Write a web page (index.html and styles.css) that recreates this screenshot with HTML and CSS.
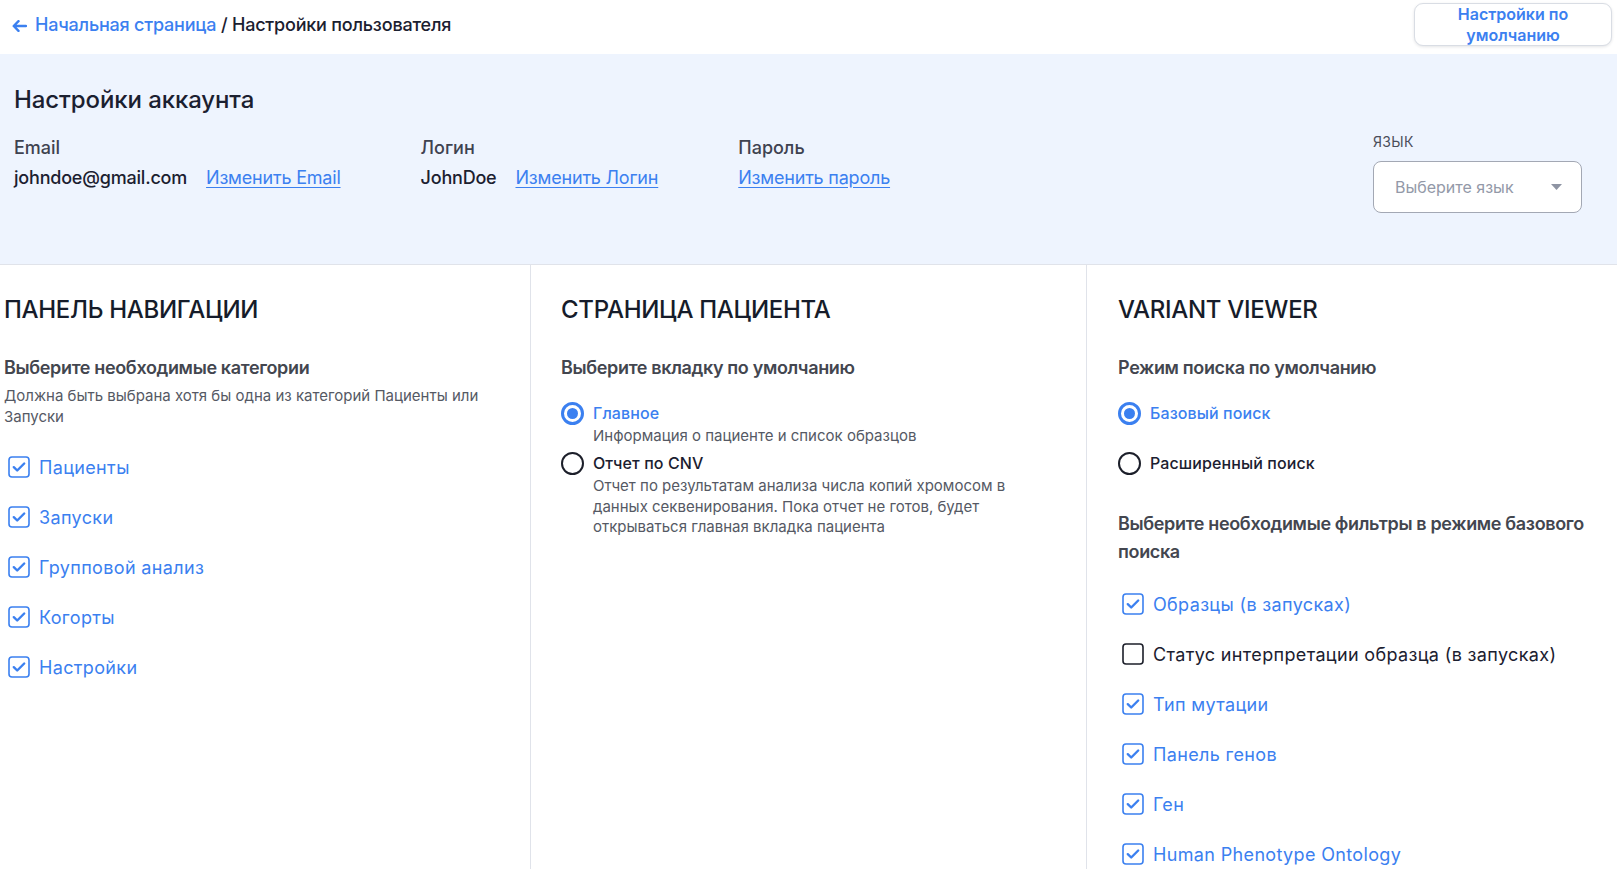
FILE: index.html
```html
<!DOCTYPE html>
<html lang="ru">
<head>
<meta charset="utf-8">
<title>Настройки пользователя</title>
<link rel="stylesheet" href="styles.css">
</head>
<body>
<header class="topbar">
  <nav class="crumbs">
    <svg class="back" width="15" height="12" viewBox="0 0 15 12"><path d="M14 6H2M6.5 1.2L1.7 6l4.8 4.8" fill="none" stroke="#3b80f0" stroke-width="2.4" stroke-linecap="round" stroke-linejoin="round"/></svg>
    <a class="crumb-link" href="#">Начальная страница</a>
    <span class="crumb-current">&nbsp;/ Настройки пользователя</span>
  </nav>
  <button class="defaults-btn">Настройки по<br>умолчанию</button>
</header>

<section class="account">
  <h1 class="account-title">Настройки аккаунта</h1>
  <div class="account-row">
    <div class="field">
      <div class="field-label">Email</div>
      <div class="field-value"><span class="value">johndoe@gmail.com</span><a class="change" href="#">Изменить Email</a></div>
    </div>
    <div class="field">
      <div class="field-label">Логин</div>
      <div class="field-value"><span class="value">JohnDoe</span><a class="change" href="#">Изменить Логин</a></div>
    </div>
    <div class="field">
      <div class="field-label">Пароль</div>
      <div class="field-value"><a class="change" href="#">Изменить пароль</a></div>
    </div>
    <div class="lang">
      <div class="lang-label">ЯЗЫК</div>
      <div class="select">
        <span class="placeholder">Выберите язык</span>
        <svg width="11" height="6" viewBox="0 0 11 6"><path d="M0 0h11L5.5 6z" fill="#8e94a3"/></svg>
      </div>
    </div>
  </div>
</section>

<main class="columns">
  <section class="col col-nav">
    <h2 class="col-title">ПАНЕЛЬ НАВИГАЦИИ</h2>
    <h3 class="sub">Выберите необходимые категории</h3>
    <p class="hint">Должна быть выбрана хотя бы одна из категорий Пациенты или Запуски</p>
    <ul class="checks">
      <li class="check on"><span class="box"><svg width="22" height="22" viewBox="0 0 22 22"><rect x="1" y="1" width="20" height="20" rx="3" fill="#fff" stroke="#3b80f0" stroke-width="1.6"/><path d="M5.8 11.2l3.4 3.3 7-7" fill="none" stroke="#3b80f0" stroke-width="2.4" stroke-linecap="round" stroke-linejoin="round"/></svg></span>Пациенты</li>
      <li class="check on"><span class="box"><svg width="22" height="22" viewBox="0 0 22 22"><rect x="1" y="1" width="20" height="20" rx="3" fill="#fff" stroke="#3b80f0" stroke-width="1.6"/><path d="M5.8 11.2l3.4 3.3 7-7" fill="none" stroke="#3b80f0" stroke-width="2.4" stroke-linecap="round" stroke-linejoin="round"/></svg></span>Запуски</li>
      <li class="check on"><span class="box"><svg width="22" height="22" viewBox="0 0 22 22"><rect x="1" y="1" width="20" height="20" rx="3" fill="#fff" stroke="#3b80f0" stroke-width="1.6"/><path d="M5.8 11.2l3.4 3.3 7-7" fill="none" stroke="#3b80f0" stroke-width="2.4" stroke-linecap="round" stroke-linejoin="round"/></svg></span>Групповой анализ</li>
      <li class="check on"><span class="box"><svg width="22" height="22" viewBox="0 0 22 22"><rect x="1" y="1" width="20" height="20" rx="3" fill="#fff" stroke="#3b80f0" stroke-width="1.6"/><path d="M5.8 11.2l3.4 3.3 7-7" fill="none" stroke="#3b80f0" stroke-width="2.4" stroke-linecap="round" stroke-linejoin="round"/></svg></span>Когорты</li>
      <li class="check on"><span class="box"><svg width="22" height="22" viewBox="0 0 22 22"><rect x="1" y="1" width="20" height="20" rx="3" fill="#fff" stroke="#3b80f0" stroke-width="1.6"/><path d="M5.8 11.2l3.4 3.3 7-7" fill="none" stroke="#3b80f0" stroke-width="2.4" stroke-linecap="round" stroke-linejoin="round"/></svg></span>Настройки</li>
    </ul>
  </section>

  <section class="col col-patient">
    <h2 class="col-title">СТРАНИЦА ПАЦИЕНТА</h2>
    <h3 class="sub">Выберите вкладку по умолчанию</h3>
    <div class="radios">
      <div class="radio-item">
        <div class="radio on"><span class="dot"></span>Главное</div>
        <p class="radio-desc">Информация о пациенте и список образцов</p>
      </div>
      <div class="radio-item">
        <div class="radio"><span class="dot"></span>Отчет по CNV</div>
        <p class="radio-desc">Отчет по результатам анализа числа копий хромосом в данных секвенирования. Пока отчет не готов, будет открываться главная вкладка пациента</p>
      </div>
    </div>
  </section>

  <section class="col col-variant">
    <h2 class="col-title">VARIANT VIEWER</h2>
    <h3 class="sub">Режим поиска по умолчанию</h3>
    <div class="radios">
      <div class="radio-item">
        <div class="radio on"><span class="dot"></span>Базовый поиск</div>
      </div>
      <div class="radio-item">
        <div class="radio"><span class="dot"></span>Расширенный поиск</div>
      </div>
    </div>
    <h3 class="sub sub-filters">Выберите необходимые фильтры в режиме базового поиска</h3>
    <ul class="checks">
      <li class="check on"><span class="box"><svg width="22" height="22" viewBox="0 0 22 22"><rect x="1" y="1" width="20" height="20" rx="3" fill="#fff" stroke="#3b80f0" stroke-width="1.6"/><path d="M5.8 11.2l3.4 3.3 7-7" fill="none" stroke="#3b80f0" stroke-width="2.4" stroke-linecap="round" stroke-linejoin="round"/></svg></span>Образцы (в запусках)</li>
      <li class="check"><span class="box"><svg width="22" height="22" viewBox="0 0 22 22"><rect x="1" y="1" width="20" height="20" rx="3" fill="#fff" stroke="#1c1f2a" stroke-width="1.6"/></svg></span>Статус интерпретации образца (в запусках)</li>
      <li class="check on"><span class="box"><svg width="22" height="22" viewBox="0 0 22 22"><rect x="1" y="1" width="20" height="20" rx="3" fill="#fff" stroke="#3b80f0" stroke-width="1.6"/><path d="M5.8 11.2l3.4 3.3 7-7" fill="none" stroke="#3b80f0" stroke-width="2.4" stroke-linecap="round" stroke-linejoin="round"/></svg></span>Тип мутации</li>
      <li class="check on"><span class="box"><svg width="22" height="22" viewBox="0 0 22 22"><rect x="1" y="1" width="20" height="20" rx="3" fill="#fff" stroke="#3b80f0" stroke-width="1.6"/><path d="M5.8 11.2l3.4 3.3 7-7" fill="none" stroke="#3b80f0" stroke-width="2.4" stroke-linecap="round" stroke-linejoin="round"/></svg></span>Панель генов</li>
      <li class="check on"><span class="box"><svg width="22" height="22" viewBox="0 0 22 22"><rect x="1" y="1" width="20" height="20" rx="3" fill="#fff" stroke="#3b80f0" stroke-width="1.6"/><path d="M5.8 11.2l3.4 3.3 7-7" fill="none" stroke="#3b80f0" stroke-width="2.4" stroke-linecap="round" stroke-linejoin="round"/></svg></span>Ген</li>
      <li class="check on"><span class="box"><svg width="22" height="22" viewBox="0 0 22 22"><rect x="1" y="1" width="20" height="20" rx="3" fill="#fff" stroke="#3b80f0" stroke-width="1.6"/><path d="M5.8 11.2l3.4 3.3 7-7" fill="none" stroke="#3b80f0" stroke-width="2.4" stroke-linecap="round" stroke-linejoin="round"/></svg></span>Human Phenotype Ontology</li>
    </ul>
  </section>
</main>
</body>
</html>
```

FILE: styles.css
```css
* { box-sizing: border-box; }
html, body { margin: 0; padding: 0; }
body {
  font-family: Inter, "Noto Sans", "Liberation Sans", sans-serif;
  color: #1b2030;
  background: #fff;
}
h1, h2, h3, p, ul { margin: 0; padding: 0; }
ul { list-style: none; }
a { color: #3b80f0; }

.topbar {
  height: 54px;
  display: flex;
  align-items: center;
  justify-content: space-between;
  padding: 3px 5px 8px 12px;
}
.crumbs {
  display: flex;
  align-items: center;
  font-size: 18px;
  font-weight: 500;
  line-height: 24px;
  letter-spacing: -0.2px;
  margin-top: 1px;
}
.back { margin-right: 8px; margin-top: 1px; }
.crumb-link { text-decoration: none; color: #3b80f0; }
.crumb-current { color: #1b2030; }
.defaults-btn {
  width: 198px;
  height: 43px;
  border: 1px solid #d9dde4;
  border-radius: 9px;
  background: #fff;
  box-shadow: 0 1px 3px rgba(30, 40, 60, 0.12);
  font-family: inherit;
  font-size: 16px;
  font-weight: 600;
  line-height: 20.5px;
  color: #3b80f0;
  padding: 0;
}

.account {
  background: #eef4fe;
  border-bottom: 1px solid #e0e3ea;
  height: 211px;
  padding: 31px 35px 0 14px;
}
.account-title {
  font-size: 24px;
  font-weight: 500;
  line-height: 30px;
  color: #1b2030;
  letter-spacing: -0.1px;
}
.account-row {
  display: flex;
  align-items: flex-start;
  gap: 80px;
  margin-top: 21px;
}
.field-label {
  font-size: 18px;
  font-weight: 500;
  line-height: 24px;
  color: #3e4250;
}
.field-value {
  display: flex;
  gap: 19px;
  margin-top: 6px;
  font-size: 18px;
  line-height: 24px;
  letter-spacing: -0.2px;
}
.value { color: #1b2030; font-weight: 500; }
.change { color: #3b80f0; text-decoration: underline; text-underline-offset: 3px; }
.lang { margin-left: auto; width: 209px; margin-top: -3px; }
.lang-label {
  font-size: 14px;
  line-height: 18px;
  color: #4a4e5a;
  letter-spacing: 0.3px;
}
.select {
  margin-top: 10px;
  height: 52px;
  border: 1px solid #a3a8b4;
  border-radius: 8px;
  background: #fff;
  display: flex;
  align-items: center;
  justify-content: space-between;
  padding: 0 19px 0 21px;
}
.placeholder { font-size: 16px; color: #9399a8; }

.columns {
  display: flex;
  align-items: stretch;
  min-height: 620px;
}
.col { padding-top: 30px; padding-bottom: 20px; }
.col-nav { width: 530px; padding-left: 4px; padding-right: 0; }
.col-patient {
  width: 557px;
  border-left: 1px solid #e0e3ea;
  border-right: 1px solid #e0e3ea;
  padding-left: 30px;
  padding-right: 30px;
}
.col-variant { flex: 1; padding-left: 31px; padding-right: 10px; }

.col-title {
  font-size: 24px;
  font-weight: 500;
  line-height: 30px;
  color: #161c2a;
  letter-spacing: -0.3px;
}
.sub {
  margin-top: 31px;
  font-size: 18px;
  font-weight: 600;
  line-height: 24px;
  color: #43464f;
  letter-spacing: -0.35px;
}
.hint {
  margin-top: 6px;
  font-size: 15px;
  line-height: 20.5px;
  color: #555964;
}
.col-nav .checks { margin-top: 15px; }
.checks li {
  display: flex;
  align-items: center;
  height: 50px;
  font-size: 18px;
  letter-spacing: 0.35px;
  color: #1b2030;
}
.checks li.on { color: #3b80f0; }
.box { display: flex; margin-left: 4px; margin-right: 9px; }

.radios { margin-top: 21px; }
.radio-item { min-height: 50px; }
.radio {
  display: flex;
  align-items: center;
  height: 24px;
  font-size: 16px;
  font-weight: 500;
  letter-spacing: 0.1px;
  color: #1b2030;
}
.radio .dot {
  width: 23px;
  height: 23px;
  border-radius: 50%;
  border: 2.6px solid #1c1f2a;
  margin-right: 9px;
  flex: none;
  position: relative;
}
.radio.on { color: #3b80f0; }
.radio.on .dot { border: 3px solid #3b80f0; }
.radio.on .dot::after {
  content: "";
  position: absolute;
  left: 3px; top: 3px;
  width: 11px; height: 11px;
  border-radius: 50%;
  background: #3b80f0;
}
.radio-desc {
  margin-left: 32px;
  max-width: 440px;
  margin-top: 1px;
  font-size: 15px;
  line-height: 20.5px;
  color: #555964;
}
.sub-filters { margin-top: 9px; line-height: 28px; max-width: 490px; }
.col-variant .checks { margin-top: 13px; }
```
